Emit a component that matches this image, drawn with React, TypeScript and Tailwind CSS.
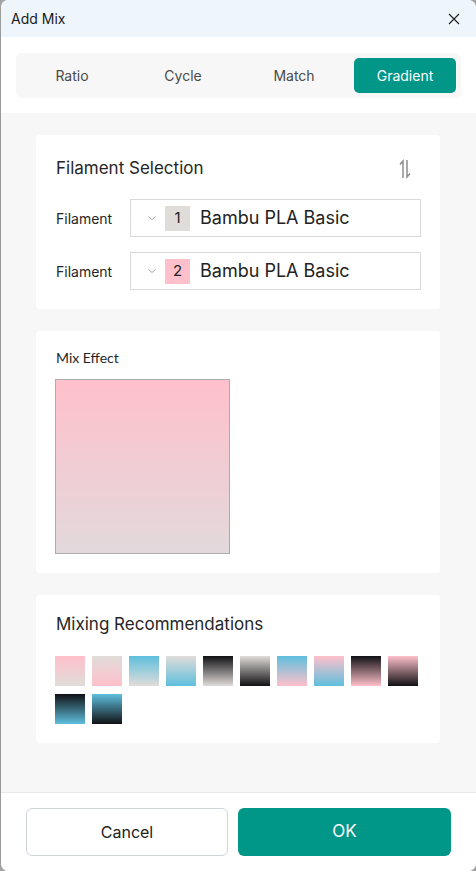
import React from "react";

const PINK = "#ffc0cb";
const GRAY = "#e0dcd9";
const BLUE = "#5ebfdd";
const BLACK = "#111114";

const swatches: [string, string][] = [
  [PINK, GRAY],
  [GRAY, PINK],
  [BLUE, GRAY],
  [GRAY, BLUE],
  [BLACK, GRAY],
  [GRAY, BLACK],
  [BLUE, PINK],
  [PINK, BLUE],
  [BLACK, PINK],
  [PINK, BLACK],
  [BLACK, BLUE],
  [BLUE, BLACK],
];

function Chevron() {
  return (
    <svg width="10" height="6" viewBox="0 0 10 6" className="shrink-0">
      <path d="M1.5 1.5 L5 4.5 L8.5 1.5" fill="none" stroke="#a0a0a0" strokeWidth="1" />
    </svg>
  );
}

function SelectRow({ n, color }: { n: string; color: string }) {
  return (
    <div className="flex items-center">
      <div className="w-[74px] text-[14px] text-[#262626]">Filament</div>
      <div className="flex-1 h-[38px] border border-[#d9d9d9] flex items-center pl-[16px]">
        <Chevron />
        <div
          className="ml-[8px] w-[25px] h-[25px] flex items-center justify-center text-[15px] text-[#222]"
          style={{ backgroundColor: color }}
        >
          {n}
        </div>
        <div className="ml-[10px] text-[18px] text-[#222] leading-none">Bambu PLA Basic</div>
      </div>
    </div>
  );
}

export default function App() {
  const tabs = ["Ratio", "Cycle", "Match", "Gradient"];
  return (
    <div
      className="w-[476px] h-[871px] bg-[#a3a3a3]"
      style={{ fontFamily: "Inter, 'Noto Sans', sans-serif" }}
    >
      <div className="w-full h-full flex flex-col rounded-[8px] overflow-hidden border-l border-[#9a9a9a] bg-white">
        {/* Title bar */}
        <div className="h-[37px] shrink-0 bg-[#eef5fb] flex items-center justify-between pl-[10px] pr-[16px]">
          <div className="text-[14px] text-[#1a1a1a]">Add Mix</div>
          <svg width="12" height="12" viewBox="0 0 12 12">
            <path d="M1 1 L11 11 M11 1 L1 11" stroke="#222" strokeWidth="1.2" />
          </svg>
        </div>

        {/* Tabs */}
        <div className="shrink-0 bg-white pt-[16px] pb-[15px] pl-[15px] pr-[15px]">
          <div className="h-[45px] bg-[#f7f7f7] rounded-[6px] flex items-center px-[5px] gap-[9px]">
            {tabs.map((t) => (
              <div
                key={t}
                className={
                  t === "Gradient"
                    ? "w-[102px] h-[35px] rounded-[5px] bg-[#009688] text-white text-[14px] flex items-center justify-center"
                    : "w-[102px] h-[35px] rounded-[5px] text-[#4a4a4a] text-[14px] flex items-center justify-center"
                }
              >
                {t}
              </div>
            ))}
          </div>
        </div>

        {/* Body */}
        <div className="flex-1 bg-[#f7f7f7] pt-[22px] pl-[35px] pr-[36px] flex flex-col gap-[22px]">
          {/* Filament Selection */}
          <div className="h-[174px] bg-white rounded-[4px] pt-[24px] pl-[20px] pr-[19px]">
            <div className="flex items-center justify-between h-[20px]">
              <div className="text-[17px] text-[#262626]">Filament Selection</div>
              <svg width="16" height="22" viewBox="0 0 16 22" className="mr-[8px]">
                <path d="M6 20 V3 L3 6.5" fill="none" stroke="#8c8c8c" strokeWidth="1.5" />
                <path d="M10 2 V19 L13 15.5" fill="none" stroke="#8c8c8c" strokeWidth="1.5" />
              </svg>
            </div>
            <div className="mt-[20px] flex flex-col gap-[15px]">
              <SelectRow n="1" color={GRAY} />
              <SelectRow n="2" color={PINK} />
            </div>
          </div>

          {/* Mix Effect */}
          <div className="h-[242px] bg-white rounded-[4px] pt-[19px] pl-[19px]">
            <div
              className="h-[16px] leading-[16px] text-[14px] text-[#262626] ml-px"
              style={{ fontFamily: "Lato, sans-serif" }}
            >
              Mix Effect
            </div>
            <div
              className="mt-[13px] w-[175px] h-[175px] border border-[#acacac]"
              style={{ background: `linear-gradient(to bottom, ${PINK}, #e2d9dc)` }}
            />
          </div>

          {/* Mixing Recommendations */}
          <div className="h-[148px] bg-white rounded-[4px] pt-[19px] pl-[19px] pr-[19px]">
            <div className="h-[20px] leading-[20px] text-[17px] text-[#262626] ml-px">
              Mixing Recommendations
            </div>
            <div className="mt-[22px] flex flex-wrap gap-x-[7px] gap-y-[8px] w-[370px]">
              {swatches.map(([a, b], i) => (
                <div
                  key={i}
                  className="w-[30px] h-[30px]"
                  style={{ background: `linear-gradient(to bottom, ${a}, ${b})` }}
                />
              ))}
            </div>
          </div>
        </div>

        {/* Footer */}
        <div className="shrink-0 h-[79px] bg-white border-t border-[#e8e8e8] flex items-start gap-[10px] pt-[15px] pl-[25px] pr-[25px]">
          <div className="w-[202px] h-[48px] border border-[#d0d4dc] rounded-[6px] flex items-center justify-center text-[16px] text-[#222]">
            Cancel
          </div>
          <div className="flex-1 h-[48px] bg-[#009688] rounded-[6px] flex items-center justify-center text-[17px] text-white">
            OK
          </div>
        </div>
      </div>
    </div>
  );
}
